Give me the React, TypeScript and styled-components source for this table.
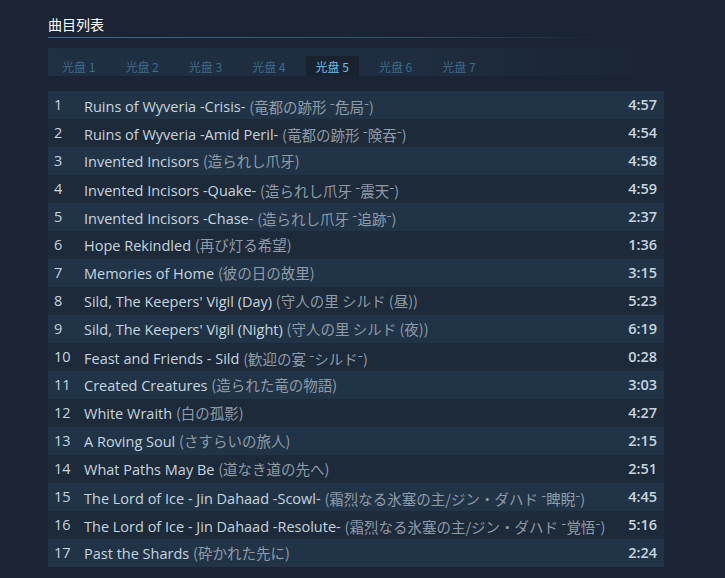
import React, { useState } from 'react';
import styled, { createGlobalStyle } from 'styled-components';

const GlobalStyle = createGlobalStyle`
    body {
        margin: 0;
        background: #1b2434;
        font-family: "Open Sans", "Noto Sans CJK JP", sans-serif;
    }
`

const Page = styled.div`
    padding: 14px 61px 0 48px;
`

const Heading = styled.div`
    color: #ffffff;
    font-size: 14px;
    line-height: 20px;
    padding-bottom: 3px;
    font-family: "Noto Sans CJK SC", sans-serif;
    border-bottom: 1px solid transparent;
    border-image: linear-gradient(to right, #3b6f8e 0%, #2f4f66 60%, rgba(47, 79, 102, 0) 90%) 1;
`

const TabBar = styled.div`
    margin-top: 10px;
    height: 28px;
    display: flex;
    align-items: flex-end;
    gap: 10px;
    padding-left: 4px;
    background: linear-gradient(to right, #1f3042 0%, #1e2d3f 60%, rgba(30, 45, 63, 0) 100%);
`

const Tab = styled.div<{ $active: boolean }>`
    height: 20px;
    padding: 0 10px;
    display: flex;
    align-items: center;
    font-size: 12px;
    font-family: "Noto Sans CJK SC", sans-serif;
    color: ${p => p.$active ? '#66c0f4' : '#3c6a8b'};
    background: ${p => p.$active ? '#19222f' : 'transparent'};
    cursor: pointer;
`

const TrackList = styled.div`
    margin-top: 15px;
`

const Row = styled.div<{ $odd: boolean }>`
    display: flex;
    align-items: center;
    height: 28px;
    padding: 0 7px 0 6px;
    font-size: 14.5px;
    line-height: 20px;
    background: ${p => p.$odd ? '#213447' : '#1d2a3a'};
    color: #c6d4df;
`

const Num = styled.div`
    width: 30px;
    flex-shrink: 0;
`

const Title = styled.div`
    flex: 1;
    white-space: nowrap;
`

const Jp = styled.span`
    color: #8f9ba6;
    font-family: "Noto Sans CJK JP", sans-serif;
    font-size: 14.5px;
`

const Dash = styled.span`
    vertical-align: 0.3em;
`

const Duration = styled.div`
    font-weight: 600;
    font-size: 14.5px;
    color: #c6d4df;
`

const tracks: [string, string, string][] = [
    ['Ruins of Wyveria -Crisis-', '(竜都の跡形 -危局-)', '4:57'],
    ['Ruins of Wyveria -Amid Peril-', '(竜都の跡形 -険吞-)', '4:54'],
    ['Invented Incisors', '(造られし爪牙)', '4:58'],
    ['Invented Incisors -Quake-', '(造られし爪牙 -震天-)', '4:59'],
    ['Invented Incisors -Chase-', '(造られし爪牙 -追跡-)', '2:37'],
    ['Hope Rekindled', '(再び灯る希望)', '1:36'],
    ['Memories of Home', '(彼の日の故里)', '3:15'],
    ["Sild, The Keepers' Vigil (Day)", '(守人の里 シルド (昼))', '5:23'],
    ["Sild, The Keepers' Vigil (Night)", '(守人の里 シルド (夜))', '6:19'],
    ['Feast and Friends - Sild', '(歓迎の宴 -シルド-)', '0:28'],
    ['Created Creatures', '(造られた竜の物語)', '3:03'],
    ['White Wraith', '(白の孤影)', '4:27'],
    ['A Roving Soul', '(さすらいの旅人)', '2:15'],
    ['What Paths May Be', '(道なき道の先へ)', '2:51'],
    ['The Lord of Ice - Jin Dahaad -Scowl-', '(霜烈なる氷塞の主/ジン・ダハド -睥睨-)', '4:45'],
    ['The Lord of Ice - Jin Dahaad -Resolute-', '(霜烈なる氷塞の主/ジン・ダハド -覚悟-)', '5:16'],
    ['Past the Shards', '(砕かれた先に)', '2:24'],
];

const discs = [1, 2, 3, 4, 5, 6, 7];

// japanese subtitles show their hyphens raised, like the store page does
const renderJp = (s: string) => s.split('-').map((part, i) => <React.Fragment key={i}>
    {i > 0 && <Dash>-</Dash>}{part}
</React.Fragment>);

const App: React.FC = () => {
    const [disc, setDisc] = useState(5);
    return <Page>
        <GlobalStyle />
        <Heading>曲目列表</Heading>
        <TabBar>
            {discs.map(d => <Tab key={d} $active={d === disc} onClick={() => setDisc(d)}>光盘 {d}</Tab>)}
        </TabBar>
        <TrackList>
            {tracks.map(([title, jp, time], i) => <Row key={i} $odd={i % 2 === 0}>
                <Num>{i + 1}</Num>
                <Title>{title} <Jp>{renderJp(jp)}</Jp></Title>
                <Duration>{time}</Duration>
            </Row>)}
        </TrackList>
    </Page>
}

export default App;
